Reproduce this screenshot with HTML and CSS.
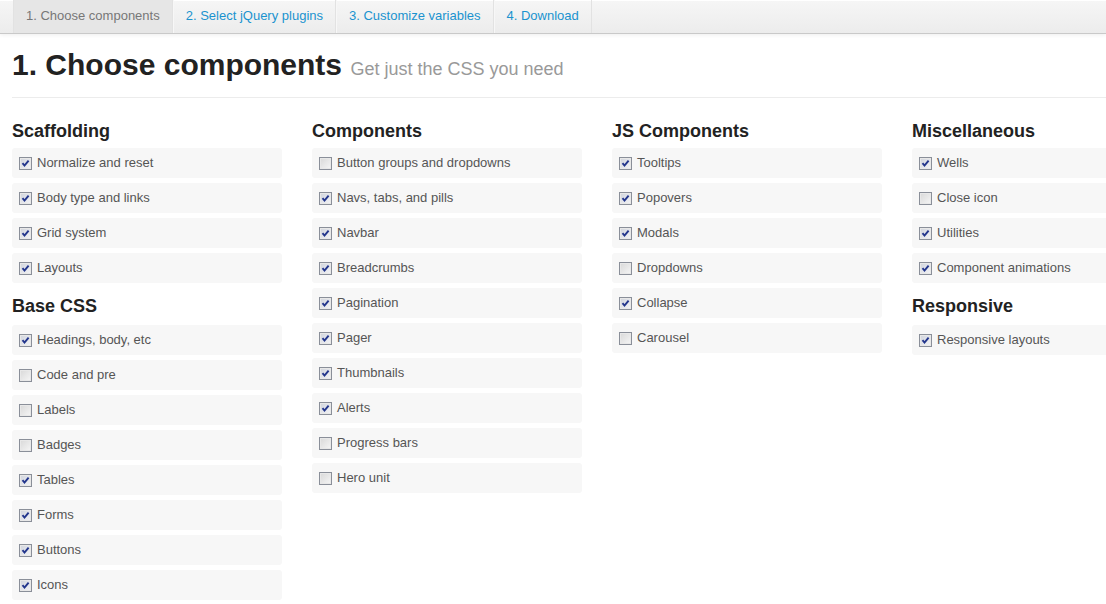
FILE: index.html
```html
<!DOCTYPE html>
<html>
<head>
<meta charset="utf-8">
<title>Customize</title>
<link rel="stylesheet" href="styles.css">
</head>
<body>
<nav class="subnav">
  <ul class="tabs">
    <li class="tab active"><a href="#">1. Choose components</a></li>
    <li class="tab"><a href="#">2. Select jQuery plugins</a></li>
    <li class="tab"><a href="#">3. Customize variables</a></li>
    <li class="tab"><a href="#">4. Download</a></li>
  </ul>
</nav>
<main class="page">
  <header class="page-header">
    <h1>1. Choose components <small>Get just the CSS you need</small></h1>
  </header>
  <div class="columns">
    <section class="col">
      <h3 class="first">Scaffolding</h3>
      <label class="checkbox"><span class="cb on"></span>Normalize and reset</label>
      <label class="checkbox"><span class="cb on"></span>Body type and links</label>
      <label class="checkbox"><span class="cb on"></span>Grid system</label>
      <label class="checkbox"><span class="cb on"></span>Layouts</label>
      <h3>Base CSS</h3>
      <label class="checkbox"><span class="cb on"></span>Headings, body, etc</label>
      <label class="checkbox"><span class="cb"></span>Code and pre</label>
      <label class="checkbox"><span class="cb"></span>Labels</label>
      <label class="checkbox"><span class="cb"></span>Badges</label>
      <label class="checkbox"><span class="cb on"></span>Tables</label>
      <label class="checkbox"><span class="cb on"></span>Forms</label>
      <label class="checkbox"><span class="cb on"></span>Buttons</label>
      <label class="checkbox"><span class="cb on"></span>Icons</label>
    </section>
    <section class="col">
      <h3 class="first">Components</h3>
      <label class="checkbox"><span class="cb"></span>Button groups and dropdowns</label>
      <label class="checkbox"><span class="cb on"></span>Navs, tabs, and pills</label>
      <label class="checkbox"><span class="cb on"></span>Navbar</label>
      <label class="checkbox"><span class="cb on"></span>Breadcrumbs</label>
      <label class="checkbox"><span class="cb on"></span>Pagination</label>
      <label class="checkbox"><span class="cb on"></span>Pager</label>
      <label class="checkbox"><span class="cb on"></span>Thumbnails</label>
      <label class="checkbox"><span class="cb on"></span>Alerts</label>
      <label class="checkbox"><span class="cb"></span>Progress bars</label>
      <label class="checkbox"><span class="cb"></span>Hero unit</label>
    </section>
    <section class="col">
      <h3 class="first">JS Components</h3>
      <label class="checkbox"><span class="cb on"></span>Tooltips</label>
      <label class="checkbox"><span class="cb on"></span>Popovers</label>
      <label class="checkbox"><span class="cb on"></span>Modals</label>
      <label class="checkbox"><span class="cb"></span>Dropdowns</label>
      <label class="checkbox"><span class="cb on"></span>Collapse</label>
      <label class="checkbox"><span class="cb"></span>Carousel</label>
    </section>
    <section class="col">
      <h3 class="first">Miscellaneous</h3>
      <label class="checkbox"><span class="cb on"></span>Wells</label>
      <label class="checkbox"><span class="cb"></span>Close icon</label>
      <label class="checkbox"><span class="cb on"></span>Utilities</label>
      <label class="checkbox"><span class="cb on"></span>Component animations</label>
      <h3>Responsive</h3>
      <label class="checkbox"><span class="cb on"></span>Responsive layouts</label>
    </section>
  </div>
</main>
</body>
</html>
```

FILE: styles.css
```css
html, body {
  margin: 0;
  padding: 0;
  background: #fff;
  overflow: hidden;
}
body {
  font-family: "Liberation Sans", Arial, sans-serif;
  font-size: 13px;
  line-height: 18px;
  color: #333;
  width: 1106px;
  height: 604px;
}

/* sub navigation */
.subnav {
  height: 33px;
  border-bottom: 1px solid #c9c9c9;
  background: linear-gradient(#f6f6f6, #ececec);
  box-shadow: inset 0 1px 0 #fff, 0 1px 4px rgba(0, 0, 0, 0.07);
}
.tabs {
  list-style: none;
  margin: 0;
  padding: 0 0 0 13px;
  display: flex;
  height: 33px;
}
.tab {
  border-left: 1px solid #f7f7f7;
  border-right: 1px solid #e2e2e2;
}
.tab a {
  display: block;
  padding: 0 12px;
  line-height: 31px;
  height: 33px;
  color: #1a93cf;
  text-decoration: none;
}
.tab.active {
  background: #e6e6e6;
  border-left-color: #e2e2e2;
}
.tab.active a {
  color: #777;
}

/* page header */
.page {
  padding: 0 0 0 12px;
  overflow: hidden;
}
.page-header {
  margin-top: 13px;
  padding-bottom: 10px;
  border-bottom: 1px solid #ececec;
}
.page-header h1 {
  margin: 0;
  font-size: 30px;
  line-height: 36px;
  font-weight: bold;
  color: #222;
}
.page-header small {
  font-size: 18px;
  font-weight: normal;
  color: #999;
}

/* columns */
.columns {
  display: grid;
  grid-template-columns: 270px 270px 270px 270px;
  column-gap: 30px;
  margin-top: 13px;
  overflow: hidden;
}
.col {
  display: flex;
  flex-direction: column;
  min-width: 0;
}
.col h3 {
  margin: 5px 0 5px;
  font-size: 18px;
  line-height: 27px;
  font-weight: bold;
  color: #222;
}
.col h3.first {
  margin-top: 7px;
  margin-bottom: 3px;
}
.checkbox {
  display: flex;
  align-items: center;
  height: 18px;
  padding: 6px 10px 6px 7px;
  margin-bottom: 5px;
  background: #f7f7f7;
  border-radius: 3px;
  color: #555;
  font-size: 13px;
  line-height: 18px;
  cursor: pointer;
}
.cb {
  flex: none;
  box-sizing: border-box;
  width: 13px;
  height: 13px;
  margin-right: 5px;
  border: 1px solid #8a8f99;
  background: linear-gradient(135deg, #d8d8d8, #f6f6f6);
  box-shadow: inset 0 0 0 1px #e8e8e8;
}
.cb.on {
  background-image: url("data:image/svg+xml,%3Csvg xmlns='http://www.w3.org/2000/svg' viewBox='0 0 11 11'%3E%3Cpath d='M2.5 5.2 L4.5 7.6 L8.6 2.6' fill='none' stroke='%2322358c' stroke-width='1.9'/%3E%3C/svg%3E"), linear-gradient(135deg, #cfd3dc, #f4f4f6);
  background-size: 100% 100%, auto;
}
```
